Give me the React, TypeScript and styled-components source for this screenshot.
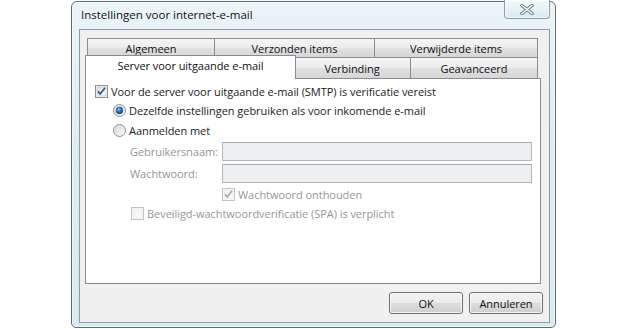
import React from 'react';
import styled, { createGlobalStyle, css } from 'styled-components';

const Global = createGlobalStyle`
  html, body { margin: 0; padding: 0; background: #ffffff; }
  body {
    font-family: "Open Sans", "Noto Sans", "DejaVu Sans", sans-serif;
    font-size: 11px;
    letter-spacing: -0.05px;
    color: #1b1b1b;
  }
`;

const Page = styled.div`
  width: 627px;
  height: 329px;
  box-sizing: border-box;
  padding: 1px 0 0 71px;
  display: flex;
  align-items: flex-start;
`;

const Window = styled.div`
  width: 485px;
  height: 327px;
  box-sizing: border-box;
  border: 1px solid #5e6c74;
  border-radius: 6px 6px 5px 5px;
  background: linear-gradient(180deg, #eaf5f9 0%, #deeef3 35%, #d8ebf1 100%);
  box-shadow: inset 0 0 0 1px rgba(255, 255, 255, 0.55);
  display: flex;
  flex-direction: column;
  padding: 0 5px 4px 7px;
`;

const TitleBar = styled.div`
  height: 27px;
  display: flex;
  justify-content: space-between;
  align-items: flex-start;
`;

const Title = styled.div`
  margin: 5px 0 0 2px;
  font-size: 11.5px;
  letter-spacing: 0;
  line-height: 15px;
  color: #111;
`;

const CloseButton = styled.div`
  width: 46px;
  height: 19px;
  margin-top: -2px;
  box-sizing: border-box;
  border: 1px solid #8e9ca4;
  border-top: none;
  border-radius: 0 0 4px 4px;
  background: linear-gradient(180deg, #f1f8fa 0%, #e4f1f5 55%, #d9eaf0 100%);
  box-shadow: inset 0 0 0 1px rgba(255, 255, 255, 0.7);
  display: flex;
  align-items: center;
  justify-content: center;
  padding-top: 1px;
`;

const Client = styled.div`
  flex: 1;
  border: 1px solid #8e9ba3;
  background: #f0f0f0;
  display: flex;
  flex-direction: column;
  padding: 8px 8px 8px 5px;
`;

const TabStrip = styled.div`
  display: flex;
  flex-direction: column;
  padding: 0 2px;
`;

const TabRow = styled.div<{ $h: number }>`
  display: flex;
  height: ${(p) => p.$h}px;
`;

const Tab = styled.div<{ $w: number; $active?: boolean; $h: number }>`
  width: ${(p) => p.$w}px;
  height: ${(p) => p.$h}px;
  box-sizing: border-box;
  border: 1px solid #898c95;
  border-bottom: none;
  margin-left: -1px;
  &:first-child { margin-left: 0; }
  display: flex;
  align-items: center;
  justify-content: center;
  color: #111;
  background: linear-gradient(180deg, #f5f5f5 0%, #ededed 45%, #e0e0e0 55%, #d6d6d6 100%);
  ${(p) =>
    p.$active &&
    css`
      position: relative;
      z-index: 1;
      background: #ffffff;
      margin: -2px -2px 0 -2px;
      &:first-child { margin-left: -2px; }
      width: ${p.$w + 4}px;
      height: ${p.$h + 3}px;
      align-items: flex-start;
      padding-top: 2px;
    `}
`;

const Panel = styled.div`
  height: 206px;
  box-sizing: border-box;
  border: 1px solid #898c95;
  background: #ffffff;
  display: flex;
  flex-direction: column;
  padding: 2px 8px 0 9px;
`;

const Row = styled.div<{ $h: number; $indent?: number; $mt?: number }>`
  height: ${(p) => p.$h}px;
  display: flex;
  align-items: center;
  padding-left: ${(p) => p.$indent ?? 0}px;
  margin-top: ${(p) => p.$mt ?? 0}px;
  flex-shrink: 0;
`;

const Label = styled.span<{ $disabled?: boolean; $gap?: number }>`
  margin-left: ${(p) => p.$gap ?? 3}px;
  white-space: nowrap;
  color: ${(p) => (p.$disabled ? '#969696' : '#1b1b1b')};
`;

const FieldLabel = styled.span`
  width: 92px;
  flex-shrink: 0;
  color: #969696;
  white-space: nowrap;
`;

const Input = styled.div`
  flex: 1;
  height: 19px;
  box-sizing: border-box;
  border: 1px solid #afb6be;
  border-top-color: #a3aab3;
  background: #edeff1;
`;

const ButtonRow = styled.div`
  display: flex;
  justify-content: flex-end;
  gap: 6px;
  margin: 8px -2px 0 0;
`;

const Button = styled.div`
  width: 74px;
  height: 22px;
  box-sizing: border-box;
  border: 1px solid #707070;
  border-radius: 3px;
  background: linear-gradient(180deg, #f2f2f2 0%, #ebebeb 48%, #dddddd 52%, #cfcfcf 100%);
  box-shadow: inset 0 0 0 1px rgba(255, 255, 255, 0.75);
  display: flex;
  align-items: center;
  justify-content: center;
  color: #111;
`;

const CheckBox: React.FC<{ checked?: boolean; disabled?: boolean }> = ({ checked, disabled }) => (
  <svg width="13" height="13" viewBox="0 0 13 13" style={{ flexShrink: 0 }}>
    <defs>
      <linearGradient id={disabled ? 'cbd' : 'cbe'} x1="0" y1="0" x2="1" y2="1">
        <stop offset="0" stopColor={disabled ? '#f4f4f4' : '#dcdcdc'} />
        <stop offset="1" stopColor={disabled ? '#fafafa' : '#fbfbfb'} />
      </linearGradient>
    </defs>
    <rect x="0.5" y="0.5" width="12" height="12" fill="#fff" stroke={disabled ? '#c2c2c2' : '#8e8f8f'} />
    <rect x="2" y="2" width="9" height="9" fill={`url(#${disabled ? 'cbd' : 'cbe'})`} stroke={disabled ? '#e2e2e2' : '#bcbcbc'} strokeWidth="0.6" />
    {checked && (
      <path
        d="M3 6.4 L5.2 9 L10 2.8"
        fill="none"
        stroke={disabled ? '#a9a9a9' : '#3c5a8e'}
        strokeWidth="1.8"
        strokeLinejoin="round"
      />
    )}
  </svg>
);

const Radio: React.FC<{ checked?: boolean }> = ({ checked }) => (
  <svg width="13" height="13" viewBox="0 0 13 13" style={{ flexShrink: 0 }}>
    <defs>
      <linearGradient id="rbg" x1="0" y1="0" x2="1" y2="1">
        <stop offset="0" stopColor="#d9d9d9" />
        <stop offset="1" stopColor="#fbfbfb" />
      </linearGradient>
      <radialGradient id="rdot" cx="0.4" cy="0.35" r="0.7">
        <stop offset="0" stopColor="#8fc7f5" />
        <stop offset="0.45" stopColor="#2a78d2" />
        <stop offset="1" stopColor="#0d3c7c" />
      </radialGradient>
    </defs>
    <circle cx="6.5" cy="6.5" r="6" fill="url(#rbg)" stroke="#8e8f8f" />
    {checked && <circle cx="6.5" cy="6.5" r="3.4" fill="url(#rdot)" stroke="#24468a" strokeWidth="0.6" />}
  </svg>
);

const CloseGlyph = () => (
  <svg width="14" height="11" viewBox="0 0 14 11">
    <path d="M2 1.5 L12 9.5 M12 1.5 L2 9.5" stroke="#6f7f88" strokeWidth="3.4" strokeLinecap="square" fill="none" />
    <path d="M2 1.5 L12 9.5 M12 1.5 L2 9.5" stroke="#ffffff" strokeWidth="1.4" strokeLinecap="square" fill="none" />
  </svg>
);

const row1 = [
  { label: 'Algemeen', w: 128 },
  { label: 'Verzonden items', w: 161 },
  { label: 'Verwijderde items', w: 164 },
];
const row2 = [
  { label: 'Server voor uitgaande e-mail', w: 207, active: true },
  { label: 'Verbinding', w: 118 },
  { label: 'Geavanceerd', w: 128 },
];

export default function App() {
  return (
    <>
      <Global />
      <Page>
        <Window>
          <TitleBar>
            <Title>Instellingen voor internet-e-mail</Title>
            <CloseButton>
              <CloseGlyph />
            </CloseButton>
          </TitleBar>
          <Client>
            <TabStrip>
              <TabRow $h={19}>
                {row1.map((t) => (
                  <Tab key={t.label} $w={t.w} $h={19}>
                    {t.label}
                  </Tab>
                ))}
              </TabRow>
              <TabRow $h={21}>
                {row2.map((t) => (
                  <Tab key={t.label} $w={t.w} $h={21} $active={t.active}>
                    {t.label}
                  </Tab>
                ))}
              </TabRow>
            </TabStrip>
            <Panel>
              <Row $h={20}>
                <CheckBox checked />
                <Label>Voor de server voor uitgaande e-mail (SMTP) is verificatie vereist</Label>
              </Row>
              <Row $h={19} $indent={18}>
                <Radio checked />
                <Label>Dezelfde instellingen gebruiken als voor inkomende e-mail</Label>
              </Row>
              <Row $h={20} $indent={18}>
                <Radio />
                <Label>Aanmelden met</Label>
              </Row>
              <Row $h={19} $indent={35} $mt={2}>
                <FieldLabel>Gebruikersnaam:</FieldLabel>
                <Input />
              </Row>
              <Row $h={19} $indent={35} $mt={3}>
                <FieldLabel>Wachtwoord:</FieldLabel>
                <Input />
              </Row>
              <Row $h={19} $indent={127} $mt={2}>
                <CheckBox checked disabled />
                <Label $disabled>Wachtwoord onthouden</Label>
              </Row>
              <Row $h={19} $indent={36}>
                <CheckBox disabled />
                <Label $disabled>Beveiligd-wachtwoordverificatie (SPA) is verplicht</Label>
              </Row>
            </Panel>
            <ButtonRow>
              <Button>OK</Button>
              <Button>Annuleren</Button>
            </ButtonRow>
          </Client>
        </Window>
      </Page>
    </>
  );
}
